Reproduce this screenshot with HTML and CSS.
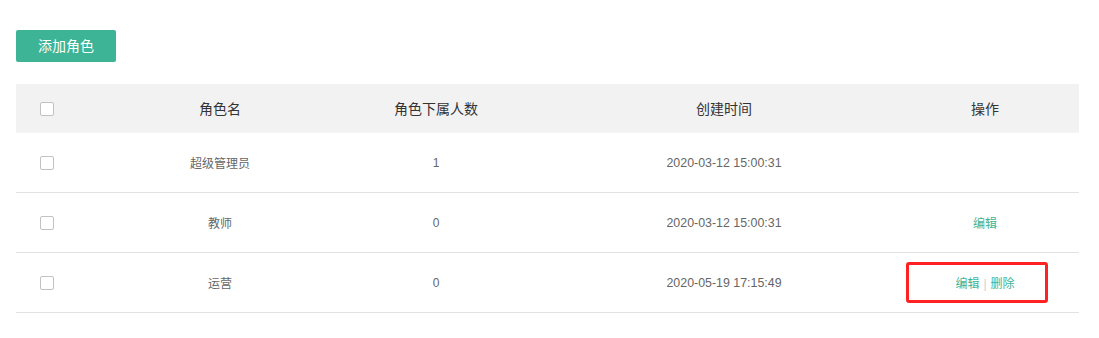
FILE: index.html
```html
<!doctype html>
<html>
<head>
<meta charset="utf-8">
<link rel="stylesheet" href="styles.css">
</head>
<body>
<div class="page">
	<div class="toolbar">
		<a class="btn_add" href="javascript:;">添加角色</a>
	</div>
	<div class="table_box">
		<table class="role_table">
			<colgroup>
				<col class="c_check">
				<col class="c_name">
				<col class="c_num">
				<col class="c_time">
				<col class="c_op">
			</colgroup>
			<thead>
				<tr>
					<th class="check"><span class="cb"></span></th>
					<th>角色名</th>
					<th>角色下属人数</th>
					<th>创建时间</th>
					<th>操作</th>
				</tr>
			</thead>
			<tbody>
				<tr>
					<td class="check"><span class="cb"></span></td>
					<td>超级管理员</td>
					<td>1</td>
					<td class="time">2020-03-12 15:00:31</td>
					<td></td>
				</tr>
				<tr>
					<td class="check"><span class="cb"></span></td>
					<td>教师</td>
					<td>0</td>
					<td class="time">2020-03-12 15:00:31</td>
					<td><a class="op" href="javascript:;">编辑</a></td>
				</tr>
				<tr>
					<td class="check"><span class="cb"></span></td>
					<td>运营</td>
					<td>0</td>
					<td class="time">2020-05-19 17:15:49</td>
					<td><a class="op" href="javascript:;">编辑</a><span class="sep">|</span><a class="op" href="javascript:;">删除</a></td>
				</tr>
			</tbody>
		</table>
		<div class="mark"></div>
	</div>
</div>
</body>
</html>
```

FILE: styles.css
```css
*{margin:0; padding:0;}
body{font-family:"Liberation Sans","Noto Sans CJK SC",sans-serif; background:#fff; color:#666;}
a{text-decoration:none;}
.page{padding:30px 20px 0 16px;}
.toolbar{height:32px; margin-bottom:22px;}
.btn_add{display:inline-block; width:100px; height:32px; line-height:32px; text-align:center; background:#3db495; color:#fff; font-size:14px; border-radius:2px;}

.table_box{position:relative; width:1063px;}
.role_table{width:1063px; border-collapse:collapse; table-layout:fixed;}
.c_check{width:109px;}
.c_name{width:190px;}
.c_num{width:242px;}
.c_time{width:334px;}
.c_op{width:188px;}
.role_table th{height:48px; background:#f2f2f2; border-bottom:1px solid #f6f6f6; color:#333; font-size:14px; font-weight:normal; text-align:center;}
.role_table td{height:59px; border-bottom:1px solid #e2e2e2; font-size:12px; color:#666; text-align:center;}
.role_table td.time{font-size:12.4px;}
.role_table .check{text-align:left; padding-left:24px;}
.cb{display:inline-block; width:12px; height:12px; border:1px solid #c2c2c2; border-radius:2px; background:#fff; vertical-align:middle;}
.op{color:#3db495;}
.sep{color:#d0d0d0; margin:0 4px;}
.mark{position:absolute; left:890px; top:178px; width:136px; height:35px; border:3px solid #ff2222; border-radius:3px;}
```
